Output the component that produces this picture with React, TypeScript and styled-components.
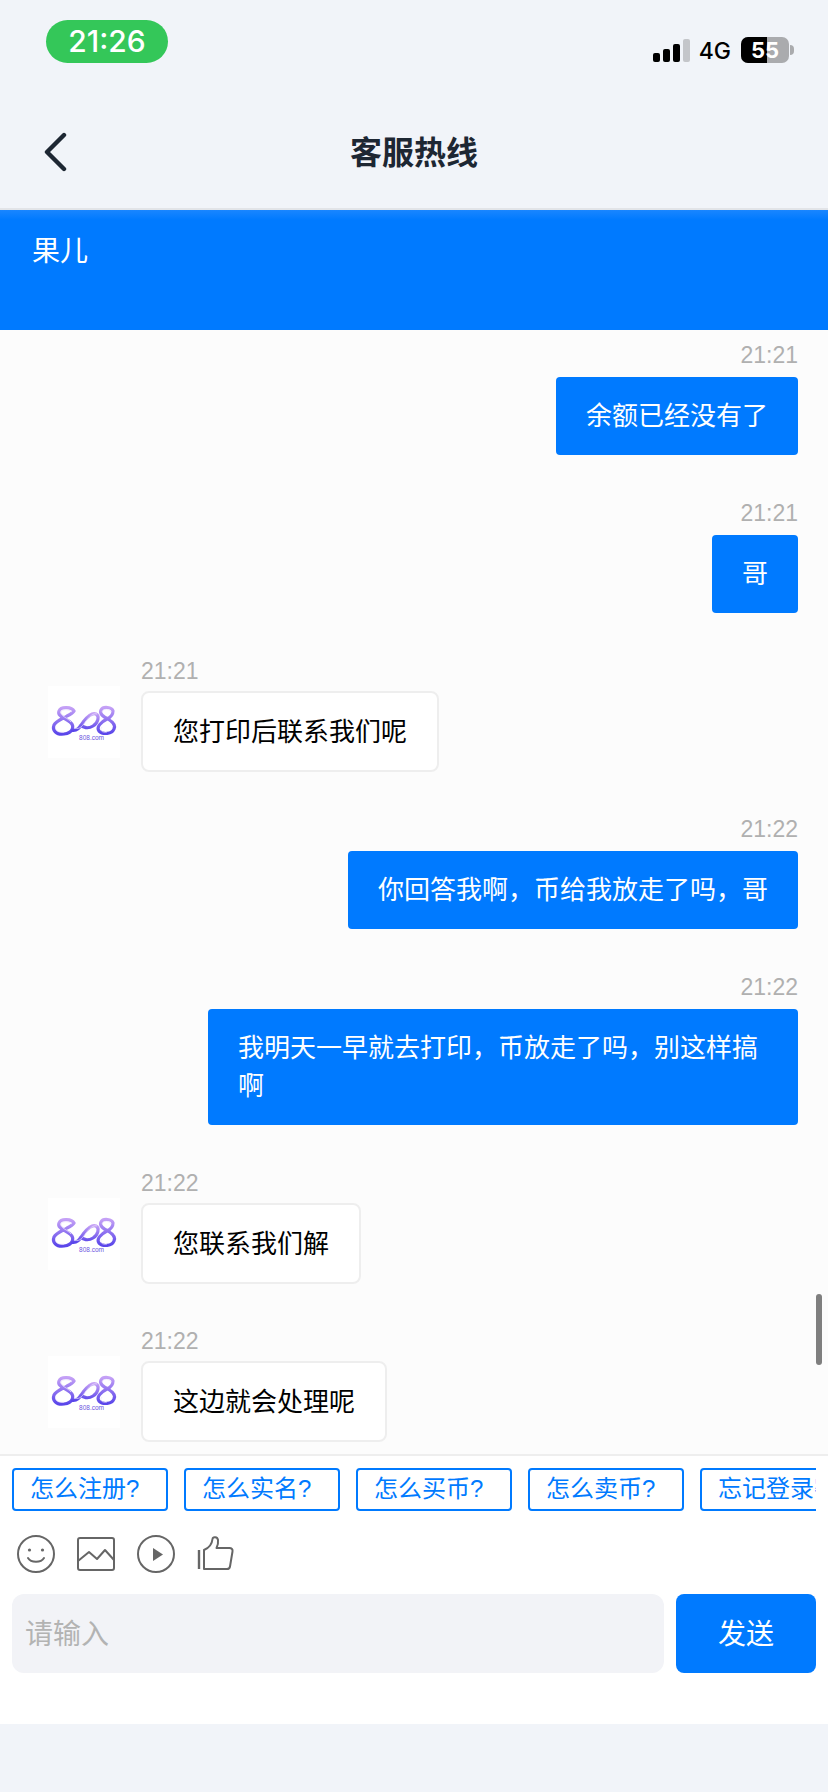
import React from 'react';
import styled, { createGlobalStyle } from 'styled-components';

const FONT = `"Liberation Sans", "Noto Sans CJK SC", sans-serif`;

type Msg = { id: number; time: string; text: string; mine: boolean };

const messages: Msg[] = [
  { id: 1, time: '21:21', text: '余额已经没有了', mine: true },
  { id: 2, time: '21:21', text: '哥', mine: true },
  { id: 3, time: '21:21', text: '您打印后联系我们呢', mine: false },
  { id: 4, time: '21:22', text: '你回答我啊，币给我放走了吗，哥', mine: true },
  { id: 5, time: '21:22', text: '我明天一早就去打印，币放走了吗，别这样搞啊', mine: true },
  { id: 6, time: '21:22', text: '您联系我们解', mine: false },
  { id: 7, time: '21:22', text: '这边就会处理呢', mine: false },
];

const quickAsks = ['怎么注册?', '怎么实名?', '怎么买币?', '怎么卖币?', '忘记登录密码?'];

function Logo() {
  return (
    <LogoSvg viewBox="0 0 72 72">
      <defs>
        <linearGradient id="logoFill" x1="0" y1="0" x2="0" y2="1">
          <stop offset="0" stopColor="#c4a0f6" />
          <stop offset="1" stopColor="#5a46ea" />
        </linearGradient>
      </defs>
      <g fill="none" stroke="url(#logoFill)" strokeWidth="3.200">
        <path d="M26 25c-2-4-13-5-15 0-2 5 6 7 11 11 5 4 3 11-6 12-8 1-12-4-10-9 2-4 8-6 13-9 4-2 6-3 7-5z" />
        <path d="M23 44c6 2 9-3 13-9 4-5 8-9 12-7 4 2 2 9-3 12-5 3-10 2-13-2" />
        <path d="M65 25c-1-4-10-5-12-1-2 4 3 7 7 9 5 3 8 6 6 10-2 5-11 6-15 2-3-4 2-9 8-12 4-2 6-4 6-8z" />
      </g>
      <g fill="none" stroke="#efe6fd" strokeWidth="0.800" opacity="0.9">
        <path d="M24 26c-3-3-10-3-11 0-1 4 7 6 10 10" />
        <path d="M8 40c-2 4 2 7 8 6" />
        <path d="M27 42c5 2 8-3 11-7 4-5 7-8 11-7" />
        <path d="M63 26c-1-3-8-4-9 0" />
        <path d="M54 41c-3 3 0 6 5 5" />
      </g>
      <LogoCaption x="43.500" y="53.500" textAnchor="middle">808.com</LogoCaption>
    </LogoSvg>
  );
}

function StatusIcons() {
  return (
    <StatusRight>
      <SignalBars>
        <SignalBar $height={9} />
        <SignalBar $height={13} />
        <SignalBar $height={18} />
        <SignalBar $height={23} $off />
      </SignalBars>
      <Network>4G</Network>
      <Battery>
        <BatteryFill />
        <BatteryLevel>55</BatteryLevel>
      </Battery>
      <BatteryNub />
    </StatusRight>
  );
}

function ToolIcons() {
  return (
    <ToolRow>
      <svg width="38" height="38" viewBox="0 0 38 38" fill="none" stroke="#666" strokeWidth="2">
        <circle cx="19" cy="19" r="18" />
        <circle cx="12.500" cy="15" r="1.600" fill="#666" stroke="none" />
        <circle cx="25.500" cy="15" r="1.600" fill="#666" stroke="none" />
        <path d="M11 23c3 5 13 5 16 0" strokeLinecap="round" />
      </svg>
      <svg width="38" height="38" viewBox="0 0 38 38" fill="none" stroke="#666" strokeWidth="2">
        <rect x="1" y="3" width="36" height="32" rx="2" />
        <path d="M1 26l11-9 8 7 8-9 9 10" strokeLinejoin="round" />
      </svg>
      <svg width="38" height="38" viewBox="0 0 38 38" fill="none" stroke="#666" strokeWidth="2">
        <circle cx="19" cy="19" r="18" />
        <path d="M16 13v13l10-6.500z" fill="#666" stroke="none" />
      </svg>
      <svg width="38" height="38" viewBox="0 0 38 38" fill="none" stroke="#666" strokeWidth="2">
        <path d="M2 15v19" strokeWidth="2.400" />
        <path d="M7 34V15c5-2 8-6 8.500-11 .3-2.500 5-2.500 5.500 1 .4 3-.5 6-1.500 8h13c2 0 3.500 1.500 3 3.500l-2.500 15c-.3 1.700-1.500 2.500-3 2.500z" strokeLinejoin="round" />
      </svg>
    </ToolRow>
  );
}

export default function App() {
  return (
    <>
      <GlobalStyle />
      <Page>
        <TopArea>
          <StatusBar>
            <ClockPill>21:26</ClockPill>
            <StatusIcons />
          </StatusBar>
          <NavBar>
            <BackIcon width="24" height="40" viewBox="0 0 24 40" fill="none">
              <path d="M21 3L4 20l17 17" stroke="#1d2733" strokeWidth="4.400" strokeLinecap="round" strokeLinejoin="round" />
            </BackIcon>
            <NavTitle>客服热线</NavTitle>
          </NavBar>
        </TopArea>
        <AgentBanner>果儿</AgentBanner>
        <ChatArea>
          <MessageList>
            {messages.map((m) =>
              m.mine ? (
                <MineRow key={m.id}>
                  <TimeLabel>{m.time}</TimeLabel>
                  <MineBubble>{m.text}</MineBubble>
                </MineRow>
              ) : (
                <TheirRow key={m.id}>
                  <Avatar>
                    <Logo />
                  </Avatar>
                  <TheirColumn>
                    <TheirTime>{m.time}</TheirTime>
                    <TheirBubble>{m.text}</TheirBubble>
                  </TheirColumn>
                </TheirRow>
              ),
            )}
          </MessageList>
          <ScrollThumb />
        </ChatArea>
        <InputPanel>
          <QuickRow>
            {quickAsks.map((q) => (
              <QuickChip key={q}>{q}</QuickChip>
            ))}
          </QuickRow>
          <ToolIcons />
          <ComposeRow>
            <TextBox>请输入</TextBox>
            <SendButton>发送</SendButton>
          </ComposeRow>
        </InputPanel>
      </Page>
    </>
  );
}

const GlobalStyle = createGlobalStyle`
  html, body {
    margin: 0;
    padding: 0;
    background: #f1f4f9;
  }
  * {
    box-sizing: border-box;
  }
`;

const Page = styled.div`
  width: 828px;
  height: 1792px;
  display: flex;
  flex-direction: column;
  overflow: hidden;
  background: #f1f4f9;
  font-family: ${FONT};
`;

const TopArea = styled.header`
  height: 210px;
  flex-shrink: 0;
  border-bottom: 2px solid #e2e4e8;
`;

const StatusBar = styled.div`
  height: 108px;
  display: flex;
  justify-content: space-between;
  padding: 20px 34px 0 46px;
`;

const ClockPill = styled.div`
  width: 122px;
  height: 43px;
  border-radius: 22px;
  background: #34c759;
  color: #fff;
  font-family: Inter, sans-serif;
  font-size: 30px;
  font-weight: 500;
  line-height: 43px;
  text-align: center;
`;

const StatusRight = styled.div`
  display: flex;
  align-items: center;
  height: 27px;
  margin-top: 16px;
`;

const SignalBars = styled.div`
  display: flex;
  align-items: flex-end;
  gap: 3.500px;
  height: 23px;
  margin-top: 2px;
`;

const SignalBar = styled.div<{ $height: number; $off?: boolean }>`
  width: 6.500px;
  height: ${(p) => p.$height}px;
  border-radius: 2px;
  background: ${(p) => (p.$off ? '#c4c6ca' : '#000')};
`;

const Network = styled.span`
  margin: 2px 10px 0 9px;
  font-family: Inter, sans-serif;
  font-size: 23px;
  font-weight: 500;
  color: #000;
`;

const Battery = styled.div`
  position: relative;
  width: 48px;
  height: 26px;
  border-radius: 7px;
  overflow: hidden;
  background: #aaabae;
`;

const BatteryFill = styled.div`
  width: 26px;
  height: 100%;
  background: #000;
`;

const BatteryLevel = styled.span`
  position: absolute;
  inset: 0;
  color: #fff;
  font-family: Inter, sans-serif;
  font-size: 22px;
  font-weight: 700;
  line-height: 26px;
  text-align: center;
`;

const BatteryNub = styled.div`
  width: 4px;
  height: 10px;
  margin-left: 1px;
  border-radius: 0 4px 4px 0;
  background: #aaabae;
`;

const NavBar = styled.div`
  position: relative;
  height: 100px;
  display: flex;
  align-items: center;
  justify-content: center;
  padding-bottom: 10px;
`;

const BackIcon = styled.svg`
  position: absolute;
  left: 43px;
  top: 24px;
`;

const NavTitle = styled.h1`
  margin: 0;
  color: #1d2733;
  font-size: 32px;
  font-weight: 600;
  line-height: 44px;
`;

const AgentBanner = styled.div`
  height: 120px;
  flex-shrink: 0;
  padding: 23px 32px 0;
  background: linear-gradient(#1a86ff 0, #007aff 10px);
  color: #fff;
  font-size: 28px;
  line-height: 38px;
`;

const ChatArea = styled.main`
  position: relative;
  flex: 1;
  min-height: 0;
  overflow: hidden;
  background: #fcfcfc;
`;

const MessageList = styled.div`
  display: flex;
  flex-direction: column;
  gap: 43px;
  padding: 10px 30px 0 48px;
`;

const MineRow = styled.div`
  display: flex;
  flex-direction: column;
  align-items: flex-end;
`;

const TheirRow = styled.div`
  display: flex;
  gap: 21px;
  margin-bottom: -1px;
`;

const TheirColumn = styled.div`
  display: flex;
  flex-direction: column;
  align-items: flex-start;
`;

const TimeLabel = styled.div`
  height: 30px;
  margin-bottom: 7px;
  color: #b0b0b0;
  font-size: 23px;
  line-height: 30px;
`;

const TheirTime = styled(TimeLabel)`
  margin-bottom: 5px;
`;

const MineBubble = styled.div`
  max-width: 590px;
  padding: 20px 30px;
  border-radius: 4px;
  background: #007aff;
  color: #fff;
  font-size: 26px;
  line-height: 38px;
`;

const TheirBubble = styled.div`
  padding: 19.500px 30px;
  border: 2px solid #eee;
  border-radius: 8px;
  background: #fff;
  color: #000;
  font-size: 26px;
  line-height: 38px;
`;

const Avatar = styled.div`
  width: 72px;
  height: 72px;
  flex-shrink: 0;
  align-self: flex-end;
  margin-bottom: 14px;
  background: #fff;
`;

const LogoSvg = styled.svg`
  display: block;
  width: 72px;
  height: 72px;
`;

const LogoCaption = styled.text`
  fill: #6d55e0;
  font-family: ${FONT};
  font-size: 6.500px;
`;

const ScrollThumb = styled.div`
  position: absolute;
  right: 6px;
  top: 964px;
  width: 6px;
  height: 71px;
  border-radius: 3px;
  background: #7f7f7f;
`;

const InputPanel = styled.section`
  height: 270px;
  flex-shrink: 0;
  margin-bottom: 68px;
  padding: 12px 12px 0;
  border-top: 2px solid #eee;
  background: #fff;
`;

const QuickRow = styled.div`
  display: flex;
  gap: 16px;
  overflow: hidden;
`;

const QuickChip = styled.div`
  width: 156px;
  height: 43px;
  flex-shrink: 0;
  padding-left: 16px;
  border: 2px solid #007aff;
  border-radius: 4px;
  color: #007aff;
  font-size: 24px;
  line-height: 37px;
  white-space: nowrap;
  overflow: hidden;

  &:last-child {
    width: 190px;
  }
`;

const ToolRow = styled.div`
  display: flex;
  gap: 22px;
  height: 38px;
  margin: 24px 0 21px 5px;
`;

const ComposeRow = styled.div`
  display: flex;
  gap: 12px;
  height: 79px;
`;

const TextBox = styled.div`
  flex: 1;
  padding: 2px 0 0 13px;
  border-radius: 12px;
  background: #f2f3f7;
  color: #b3b3b3;
  font-size: 28px;
  line-height: 77px;
`;

const SendButton = styled.div`
  width: 140px;
  padding-top: 2px;
  border-radius: 8px;
  background: #007aff;
  color: #fff;
  font-size: 28px;
  line-height: 77px;
  text-align: center;
`;
